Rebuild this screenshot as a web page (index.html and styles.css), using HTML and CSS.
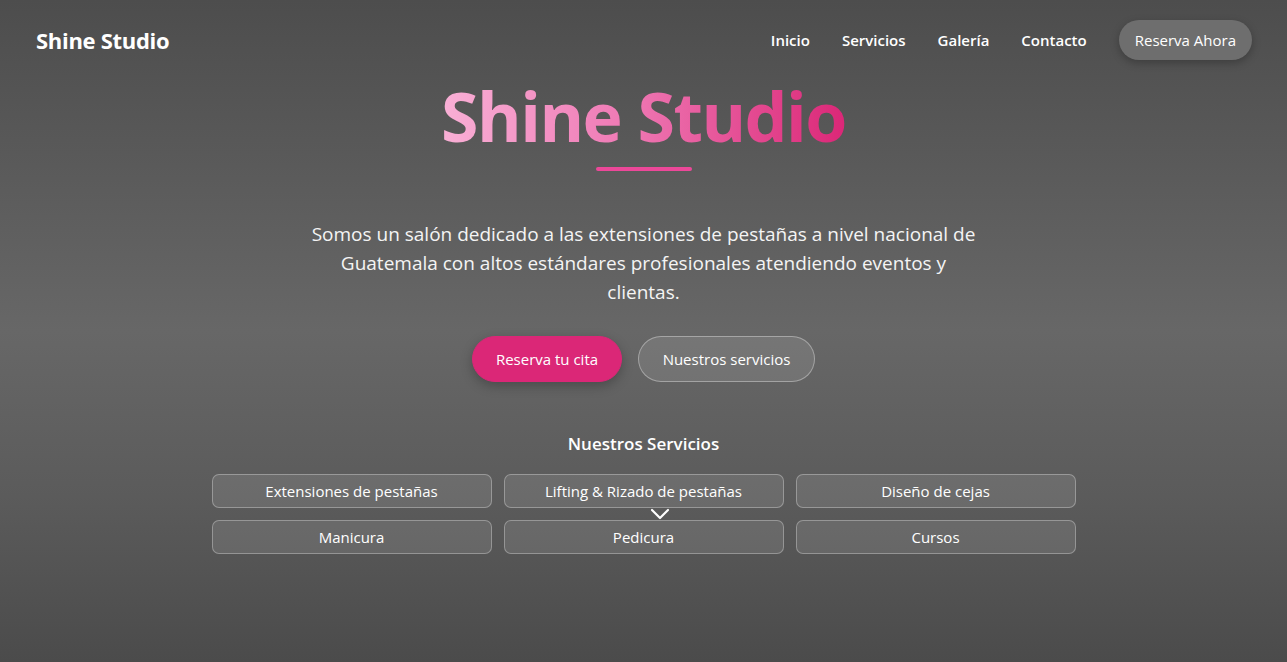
FILE: index.html
```html
<!DOCTYPE html>
<html lang="es">
<head>
<meta charset="utf-8">
<title>Shine Studio</title>
<link rel="stylesheet" href="styles.css">
</head>
<body>
<div class="page">
  <header class="nav">
    <a class="logo" href="#">Shine Studio</a>
    <nav class="links">
      <a href="#">Inicio</a>
      <a href="#">Servicios</a>
      <a href="#">Galería</a>
      <a href="#">Contacto</a>
      <a class="nav-btn" href="#">Reserva Ahora</a>
    </nav>
  </header>
  <main class="hero">
    <h1 class="title">Shine Studio</h1>
    <div class="rule"></div>
    <p class="lead">Somos un salón dedicado a las extensiones de pestañas a nivel nacional de Guatemala con altos estándares profesionales atendiendo eventos y clientas.</p>
    <div class="actions">
      <a class="btn btn-primary" href="#">Reserva tu cita</a>
      <a class="btn btn-ghost" href="#">Nuestros servicios</a>
    </div>
    <h2 class="sub">Nuestros Servicios</h2>
    <div class="services">
      <div class="svc">Extensiones de pestañas</div>
      <div class="svc">Lifting &amp; Rizado de pestañas</div>
      <div class="svc">Diseño de cejas</div>
      <div class="svc">Manicura</div>
      <div class="svc">Pedicura</div>
      <div class="svc">Cursos</div>
      <svg class="chev" viewBox="0 0 20 12" width="20" height="12"><path d="M2 2 L10 10 L18 2" fill="none" stroke="#fff" stroke-width="2.2" stroke-linecap="round" stroke-linejoin="round"/></svg>
    </div>
  </main>
</div>
</body>
</html>
```

FILE: styles.css
```css
* { box-sizing: border-box; }
html, body { margin: 0; padding: 0; }
body {
  font-family: "Open Sans", "Noto Sans", sans-serif;
  color: #fff;
  background: #4b4b4b;
}
a { color: inherit; text-decoration: none; }
.page {
  height: 662px;
  background: linear-gradient(180deg, #4d4d4d 0%, #5a5a5a 25%, #676767 50%, #5b5b5b 75%, #4b4b4b 100%);
  overflow: hidden;
}
.nav {
  display: flex;
  align-items: center;
  justify-content: space-between;
  padding: 20px 35px 0 36px;
  height: 60px;
}
.logo {
  font-size: 22px;
  font-weight: 700;
  letter-spacing: -0.3px;
}
.links {
  display: flex;
  align-items: center;
  gap: 32px;
  font-size: 15px;
  font-weight: 600;
}
.nav-btn {
  font-weight: 400;
  height: 40px;
  line-height: 40px;
  padding: 0 16px;
  border-radius: 20px;
  background: #6e6e6e;
  box-shadow: 0 3px 8px rgba(0,0,0,0.25);
}
.hero {
  display: flex;
  flex-direction: column;
  align-items: center;
  text-align: center;
}
.title {
  margin: 15px 0 0;
  font-size: 68px;
  line-height: 82px;
  font-weight: 700;
  letter-spacing: -1.5px;
  background: linear-gradient(90deg, #f9b0d6 0%, #ef7ab5 45%, #db2777 100%);
  -webkit-background-clip: text;
  background-clip: text;
  color: transparent;
}
.rule {
  width: 96px;
  height: 4px;
  border-radius: 2px;
  background: #ec4899;
  margin-top: 10px;
}
.lead {
  margin: 49px 0 0;
  max-width: 672px;
  font-size: 19px;
  line-height: 28.8px;
  color: #f4f4f4;
}
.actions {
  display: flex;
  gap: 16px;
  margin-top: 30px;
}
.btn {
  height: 46px;
  line-height: 44px;
  border-radius: 23px;
  font-size: 15px;
}
.btn-primary {
  width: 150px;
  background: #db2777;
  border: 1px solid #db2777;
  box-shadow: 0 4px 12px rgba(0,0,0,0.25);
}
.btn-ghost {
  width: 177px;
  background: rgba(255,255,255,0.1);
  border: 1px solid rgba(255,255,255,0.35);
}
.sub {
  margin: 50px 0 0;
  font-size: 17px;
  line-height: 24px;
  font-weight: 600;
}
.services {
  position: relative;
  margin-top: 18px;
  display: grid;
  grid-template-columns: repeat(3, 280px);
  gap: 12px;
}
.svc {
  height: 34px;
  line-height: 32px;
  border-radius: 7px;
  border: 1px solid rgba(255,255,255,0.3);
  background: rgba(255,255,255,0.1);
  font-size: 15px;
}
.chev {
  position: absolute;
  left: 438px;
  top: 34px;
}
```
